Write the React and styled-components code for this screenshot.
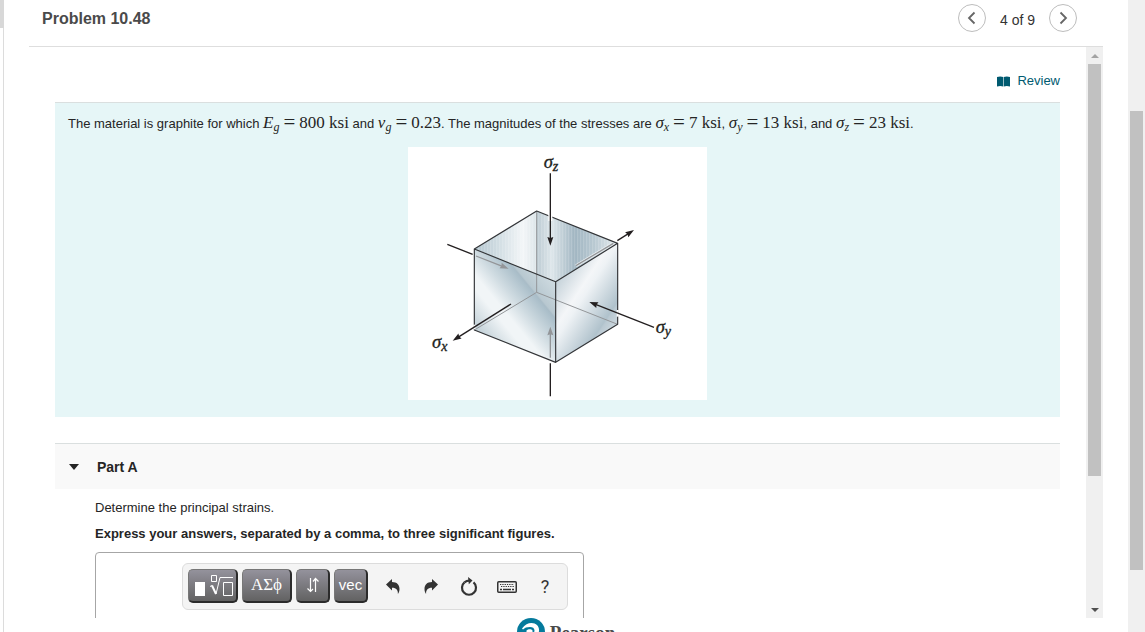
import React from "react";
import styled, { createGlobalStyle } from "styled-components";

const sans = '"Liberation Sans", Arial, sans-serif';
const serif = '"Liberation Serif", "Times New Roman", serif';

const GlobalStyle = createGlobalStyle`
  * { box-sizing: border-box; }
  body { margin: 0; background: #fff; color: #252525; font: 13px/20px ${sans}; }
  h1, h2, p { margin: 0; }
  button { font-family: inherit; padding: 0; cursor: pointer; }
  svg { display: block; }
`;

const Page = styled.div`
  display: flex;
  height: 100vh;
  overflow: hidden;
`;

const LeftRail = styled.div`
  flex: none;
  width: 4px;
  border-right: 1px solid #dcdcdc;
  background: #fff;
`;

const RailThumb = styled.div`
  width: 4px;
  height: 28px;
  background: #d8d8d8;
`;

const Main = styled.main`
  flex: 1;
  min-width: 0;
  display: flex;
  flex-direction: column;
  padding: 0 25px;
`;

const Header = styled.header`
  flex: none;
  display: flex;
  justify-content: space-between;
  height: 47px;
  padding: 4px 26px 0 13px;
  border-bottom: 1px solid #dedede;
`;

const Title = styled.h1`
  font-size: 16px;
  line-height: 30px;
  color: #4a4a4a;
`;

const Pager = styled.nav`
  display: flex;
  gap: 14px;
  height: 28px;
  font-size: 14px;
  line-height: 32px;
  color: #333;
`;

const RoundButton = styled.button`
  display: grid;
  place-items: center;
  width: 28px;
  height: 28px;
  border: 1px solid #bdbdbd;
  border-radius: 50%;
  background: #fff;
`;

const Body = styled.div`
  flex: 1;
  min-height: 0;
  display: flex;
`;

const Content = styled.div`
  flex: 1;
  min-width: 0;
  overflow: hidden;
  padding: 0 26px;
`;

const ReviewRow = styled.div`
  display: flex;
  justify-content: flex-end;
  padding: 24px 0 11px;
`;

const ReviewLink = styled.a`
  display: flex;
  align-items: center;
  gap: 7px;
  color: #005a70;
  text-decoration: none;
`;

const Intro = styled.section`
  padding: 10px 13px 17px;
  border-top: 1px solid #dadfdf;
  background: #e6f6f7;
`;

const Statement = styled.p`
  line-height: 22px;
`;

const Formula = styled.span`
  font-family: ${serif};
  font-size: 17px;
  line-height: 16px;
  white-space: nowrap;

  sub {
    font-size: 12px;
    line-height: 0;
    vertical-align: -3px;
    font-style: italic;
  }
`;

const Equals = styled.span`
  margin: 0 4px;
  font-size: 21px;
  line-height: 0;
  vertical-align: -1px;

  &::before { content: "="; }
`;

const Figure = styled.figure`
  width: 299px;
  max-width: 100%;
  margin: 12px auto 0;
  background: #fff;
`;

const SigmaLabel = styled.text`
  font: italic 56px ${serif};
  fill: #231f20;
  stroke: #231f20;
  stroke-width: 1;
`;

const PartHeader = styled.div`
  display: flex;
  align-items: center;
  gap: 18px;
  height: 46px;
  margin-top: 26px;
  padding: 0 14px;
  border-top: 1px solid #dadfdf;
  background: #f9f9f9;
`;

const Disclosure = styled.button`
  display: grid;
  place-items: center;
  width: 10px;
  height: 20px;
  border: 0;
  background: none;
`;

const PartTitle = styled.h2`
  font-size: 14px;
  line-height: 20px;
`;

const PartBody = styled.section`
  padding: 9px 0 0 40px;
`;

const Prompt = styled.p`
  margin-bottom: 6px;
  font-weight: ${(p) => (p.$strong ? "bold" : "normal")};
`;

const AnswerBox = styled.div`
  width: 489px;
  max-width: 100%;
  height: 160px;
  margin-top: 8px;
  padding: 10px 15px 0 86px;
  border: 1px solid #a6a6a6;
  border-radius: 4px;
`;

const Toolbar = styled.div`
  display: flex;
  align-items: center;
  gap: 4px;
  height: 47px;
  padding: 0 5px 2px;
  border: 1px solid #dcdcdc;
  border-radius: 6px;
  background: #f4f4f4;
`;

const DarkButton = styled.button`
  display: grid;
  place-items: center;
  width: ${(p) => (p.$wide ? 50 : 34)}px;
  height: 34px;
  border: 1px solid #777;
  border-right: 2px solid #2b2b2b;
  border-bottom: 2px solid #2b2b2b;
  border-radius: 5px;
  background: linear-gradient(#94929c, #626262);
  color: #fff;
  font-size: 15px;
  line-height: 30px;
`;

const Greek = styled.span`
  font-family: ${serif};
  font-size: 17px;
`;

const PlainTools = styled.div`
  display: flex;
  gap: 4px;
  padding: 2px 0 0 4px;
`;

const PlainButton = styled.button`
  display: grid;
  place-items: center;
  width: 34px;
  height: 34px;
  border: 0;
  background: none;
  color: #333;
  font: 18px/34px Roboto, ${sans};
`;

const Track = styled.div`
  flex: none;
  display: flex;
  flex-direction: column;
  width: 17px;
  padding: 0 2px;
  background: #f0f0f0;
`;

const TrackButton = styled.button`
  display: grid;
  place-items: center;
  height: 17px;
  border: 0;
  background: none;
`;

const Gap = styled.div`
  flex: ${(p) => p.$grow};
`;

const Thumb = styled.div`
  flex: ${(p) => p.$grow};
  background: #c1c1c1;
`;

const Footer = styled.footer`
  flex: none;
  display: flex;
  justify-content: center;
  gap: 5px;
  height: 14px;
  overflow: hidden;
  font: bold 19px/30px ${serif};
  color: #4a4a4a;
`;

const Chevron = ({ d }) => (
  <svg width="14" height="14" viewBox="0 0 14 14" fill="none" stroke="#666" strokeWidth="1.8">
    <path d={d} />
  </svg>
);

const BookIcon = () => (
  <svg width="13" height="11" viewBox="0 0 13 11" fill="#005a70">
    <path d="M0 1C2 .2 4.500 .2 6.200 1v9.400C4.500 9.700 2 9.700 0 10.400zM6.800 1C8.500 .2 11 .2 13 1v9.400C11 9.700 8.500 9.700 6.800 10.400z" />
  </svg>
);

const Arrow = ({ from, to, color = "#231f20", w = 4 }) => {
  const dx = to[0] - from[0];
  const dy = to[1] - from[1];
  const len = Math.hypot(dx, dy);
  const angle = (Math.atan2(dy, dx) * 180) / Math.PI;
  return (
    <g transform={`translate(${from[0]} ${from[1]}) rotate(${angle})`} fill={color}>
      <path d={`M0 0H${len - 20}`} stroke={color} strokeWidth={w} />
      <path d={`M${len} 0l-26 -9l3 9l-3 9z`} />
    </g>
  );
};

const CubeDrawing = () => (
  <svg viewBox="24 21 897 759" width="100%" role="img" aria-label="Stressed cube">
    <defs>
      <linearGradient id="inner" gradientUnits="userSpaceOnUse" x1="223" y1="0" x2="653" y2="0">
        <stop offset="0" stopColor="#b3c5cf" />
        <stop offset=".15" stopColor="#cddae0" />
        <stop offset=".34" stopColor="#f3f6f8" />
        <stop offset=".434" stopColor="#dce5e9" />
        <stop offset=".436" stopColor="#bccbd3" />
        <stop offset=".54" stopColor="#dde6ea" />
        <stop offset=".7" stopColor="#a0b5c1" />
        <stop offset=".84" stopColor="#b9c9d2" />
        <stop offset="1" stopColor="#e6edf0" />
      </linearGradient>
      <linearGradient id="leftFace" gradientUnits="userSpaceOnUse" x1="223" y1="620" x2="477" y2="412">
        <stop offset="0" stopColor="#b4c5ce" />
        <stop offset=".12" stopColor="#c3d1d8" />
        <stop offset=".34" stopColor="#f1f5f7" />
        <stop offset=".42" stopColor="#f1f5f7" />
        <stop offset=".56" stopColor="#cfdbe1" />
        <stop offset=".72" stopColor="#abbfca" />
        <stop offset=".735" stopColor="#a9bcc7" />
        <stop offset=".75" stopColor="#b8c8d0" />
        <stop offset="1" stopColor="#d5e0e5" />
      </linearGradient>
      <linearGradient id="rightFace" gradientUnits="userSpaceOnUse" x1="455" y1="430" x2="670" y2="570">
        <stop offset="0" stopColor="#c0ced6" />
        <stop offset=".32" stopColor="#f4f6f8" />
        <stop offset=".4" stopColor="#eef2f5" />
        <stop offset=".76" stopColor="#b0c2cc" />
        <stop offset=".78" stopColor="#bac9d2" />
        <stop offset="1" stopColor="#dbe4e9" />
      </linearGradient>
      <pattern id="ribs" width="9" height="9" patternUnits="userSpaceOnUse">
        <path d="M2 0V9" stroke="#fff" strokeOpacity=".18" strokeWidth="3" />
      </pattern>
    </defs>
    <path d="M410 213L223 327L467 425L653 310z" fill="url(#inner)" />
    <path d="M410 213L223 327L467 425L653 310z" fill="url(#ribs)" />
    <path d="M223 327L467 425V667L223 570z" fill="url(#leftFace)" />
    <path d="M467 425L653 310V553L467 667z" fill="url(#rightFace)" />
    <path d="M410 213V457L223 570M410 457L653 553" fill="none" stroke="#939699" strokeWidth="3" />
    <path d="M528 377L640 310" stroke="#e9eff2" strokeWidth="9" />
    <path d="M528 377L640 310" stroke="#939598" strokeWidth="4" />
    <path d="M410 213L223 327V570L467 667L653 553V310zM223 327L467 425L653 310M467 425V667" fill="none" stroke="#333538" strokeWidth="3.500" strokeLinejoin="round" />
    <path d="M451 218V243" stroke="#fff" strokeWidth="12" />
    <Arrow from={[451, 100]} to={[451, 317]} />
    <path d="M451 670V769M142 313L218 343" stroke="#231f20" strokeWidth="4" />
    <Arrow from={[451, 653]} to={[451, 560]} color="#939598" />
    <Arrow from={[228, 348]} to={[326, 386]} color="#939598" />
    <path d="M653 510V530" stroke="#fff" strokeWidth="6" />
    <Arrow from={[762, 562]} to={[568, 486]} />
    <path d="M223 554V568" stroke="#fff" strokeWidth="6" />
    <Arrow from={[333, 492]} to={[158, 602]} />
    <Arrow from={[652, 302]} to={[702, 270]} />
    <SigmaLabel x="431" y="83">σ<tspan dy="9" fontSize="42">z</tspan></SigmaLabel>
    <SigmaLabel x="96" y="625">σ<tspan dy="9" fontSize="42">x</tspan></SigmaLabel>
    <SigmaLabel x="767" y="578">σ<tspan dy="9" fontSize="42">y</tspan></SigmaLabel>
  </svg>
);

const TemplateIcon = () => (
  <svg width="40" height="24" viewBox="0 0 40 24" fill="none" stroke="#fff">
    <path d="M2 9h10v14H2z" fill="#fff" stroke="none" />
    <path d="M18.500 2.500h5v6h-5z" strokeWidth="1" />
    <path d="M17 13.500l2-1" strokeWidth="1" />
    <path d="M19 12.500l4 8.500" strokeWidth="2" />
    <path d="M23 21L27 4.500H40" strokeWidth="1" />
    <path d="M30.500 9.500h9v13h-9z" strokeWidth="1" />
  </svg>
);

const UpDownIcon = () => (
  <svg width="14" height="16" viewBox="0 0 14 16" fill="none" stroke="#fff" strokeWidth="1.200">
    <path d="M4.500 1v13M1.500 11.500l3 3L7 12M9.500 15V2M7 4.500L9.500 1.500L12.500 4.500" />
  </svg>
);

const turn = "M0 5.500L6 0v3c5 0 7.500 2.800 7.500 7 0 2-.6 3.600-1.600 5 .3-3.800-1.400-6.300-5.900-6.300V11.500z";
const UndoIcon = () => (
  <svg width="14" height="16" viewBox="0 0 14 16" fill="#333"><path d={turn} /></svg>
);
const RedoIcon = () => (
  <svg width="14" height="16" viewBox="0 0 14 16" fill="#333"><path d={turn} transform="translate(14 0) scale(-1 1)" /></svg>
);
const ResetIcon = () => (
  <svg width="18" height="20" viewBox="0 0 18 20" fill="none" stroke="#333" strokeWidth="2.200">
    <path d="M13.500 5.400A7 7 0 1 1 4.500 5.400" />
    <path d="M4.500 5.400Q6.500 3.700 9.500 3.700" />
    <path d="M8 0L12.500 3.500L8.800 7.200z" fill="#333" stroke="none" />
  </svg>
);
const KeyboardIcon = () => (
  <svg width="20" height="12" viewBox="0 0 20 12" fill="none" stroke="#333">
    <rect x=".75" y=".75" width="18.500" height="10.500" rx="1" strokeWidth="1.500" />
    <path d="M3 3.500H17M4 5.500H17" strokeWidth="1.200" strokeDasharray="1.300 1" />
    <path d="M3 8.500h2M6 8.500h8M15 8.500h2" strokeWidth="1.400" />
  </svg>
);

const PearsonMark = () => (
  <svg width="28" height="28" viewBox="0 0 28 28">
    <circle cx="14" cy="14" r="14" fill="#047a9c" />
    <path d="M5 10.500C8 6.500 11 5 14.500 5c5 0 8 3.500 7.500 8-.4 3.500-3.500 5.500-7 6V24h-3.500v-8C15 16.500 17.500 15 17.500 12.500c0-2.500-2-3.500-4.500-3.500-3 0-5.500 .8-7 2.500z" fill="#fff" />
    <path d="M9.500 12.500C11 11 14.500 10.800 15.500 12.500V15h-6z" fill="#fff" />
  </svg>
);

const Triangle = ({ d, color, w = 8, h = 4 }) => (
  <svg width={w} height={h} viewBox={`0 0 ${w} ${h}`} fill={color}><path d={d} /></svg>
);

export default function App() {
  return (
    <Page>
      <GlobalStyle />
      <LeftRail><RailThumb /></LeftRail>
      <Main>
        <Header>
          <Title>Problem 10.48</Title>
          <Pager aria-label="Problems">
            <RoundButton aria-label="Previous"><Chevron d="M9.500 1.500L4 7L9.500 12.500" /></RoundButton>
            <span>4 of 9</span>
            <RoundButton aria-label="Next"><Chevron d="M4.500 1.500L10 7L4.500 12.500" /></RoundButton>
          </Pager>
        </Header>
        <Body>
          <Content>
            <ReviewRow>
              <ReviewLink href="#review"><BookIcon />Review</ReviewLink>
            </ReviewRow>
            <Intro>
              <Statement>
                The material is graphite for which <Formula><i>E</i><sub>g</sub><Equals />800 ksi</Formula> and{" "}
                <Formula><i>ν</i><sub>g</sub><Equals />0.23</Formula>. The magnitudes of the stresses are{" "}
                <Formula><i>σ</i><sub>x</sub><Equals />7 ksi</Formula>, <Formula><i>σ</i><sub>y</sub><Equals />13 ksi</Formula>, and{" "}
                <Formula><i>σ</i><sub>z</sub><Equals />23 ksi</Formula>.
              </Statement>
              <Figure><CubeDrawing /></Figure>
            </Intro>
            <PartHeader>
              <Disclosure aria-label="Collapse Part A"><Triangle w={10} h={6} d="M0 0H10L5 6z" color="#252525" /></Disclosure>
              <PartTitle>Part A</PartTitle>
            </PartHeader>
            <PartBody>
              <Prompt>Determine the principal strains.</Prompt>
              <Prompt $strong>Express your answers, separated by a comma, to three significant figures.</Prompt>
              <AnswerBox>
                <Toolbar role="toolbar" aria-label="Equation tools">
                  <DarkButton $wide aria-label="Templates"><TemplateIcon /></DarkButton>
                  <DarkButton $wide><Greek>ΑΣϕ</Greek></DarkButton>
                  <DarkButton aria-label="Arrows"><UpDownIcon /></DarkButton>
                  <DarkButton>vec</DarkButton>
                  <PlainTools>
                    <PlainButton aria-label="Undo"><UndoIcon /></PlainButton>
                    <PlainButton aria-label="Redo"><RedoIcon /></PlainButton>
                    <PlainButton aria-label="Reset"><ResetIcon /></PlainButton>
                    <PlainButton aria-label="Keyboard shortcuts"><KeyboardIcon /></PlainButton>
                    <PlainButton>?</PlainButton>
                  </PlainTools>
                </Toolbar>
              </AnswerBox>
            </PartBody>
          </Content>
          <Track>
            <TrackButton aria-label="Scroll up"><Triangle d="M0 4L4 0L8 4z" color="#a3a3a3" /></TrackButton>
            <Thumb $grow={412} />
            <Gap $grow={125} />
            <TrackButton aria-label="Scroll down"><Triangle d="M0 0H8L4 4z" color="#505050" /></TrackButton>
          </Track>
        </Body>
        <Footer><PearsonMark />Pearson</Footer>
      </Main>
      <Track>
        <Gap $grow={111} />
        <Thumb $grow={459} />
        <Gap $grow={62} />
      </Track>
    </Page>
  );
}
